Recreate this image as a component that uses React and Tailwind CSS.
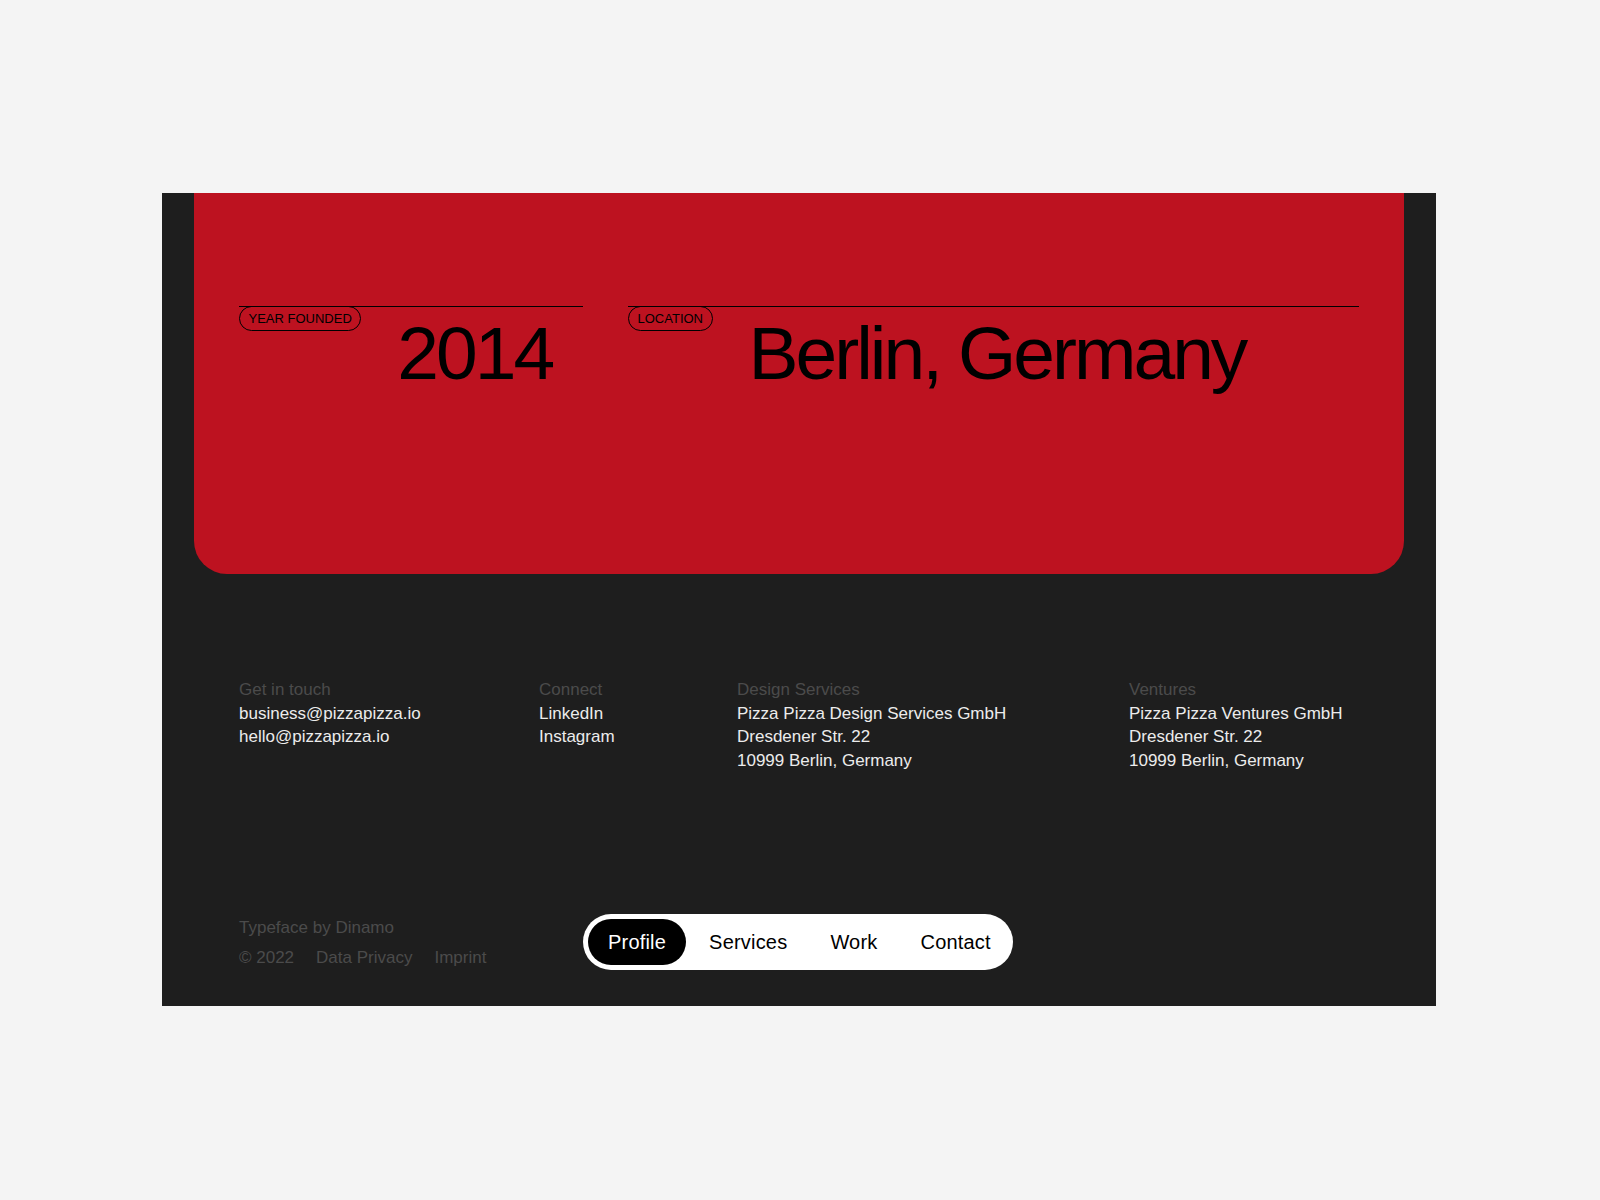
import { useState } from 'react'

const font = { fontFamily: '"Liberation Sans", Arial, sans-serif' }

function Stat({ label, value, className }) {
  return (
    <div className={`border-t border-black ${className}`}>
      <div className="flex items-start gap-9 -mt-px">
        <span className="shrink-0 rounded-full border border-black px-[8.5px] h-[25px] leading-[23px] text-[13px] text-black uppercase">
          {label}
        </span>
        <span className="mt-[10px] text-[75px] leading-[75px] tracking-[-0.04em] text-black whitespace-nowrap">
          {value}
        </span>
      </div>
    </div>
  )
}

function FooterCol({ title, lines }) {
  return (
    <div className="text-[17px] leading-[23.5px]">
      <p className="text-[#4b4b4b]">{title}</p>
      {lines.map((line) => (
        <p key={line} className="text-[#ececec]">{line}</p>
      ))}
    </div>
  )
}

export default function App() {
  const [active, setActive] = useState('Profile')
  const nav = ['Profile', 'Services', 'Work', 'Contact']

  return (
    <div className="min-h-[1200px] bg-[#f4f4f4] pt-[193px]" style={font}>
      <div className="ml-[162px] w-[1274px] h-[813px] bg-[#1e1e1e] flex flex-col">
        {/* Red card */}
        <div className="mx-8 h-[381px] bg-[#bd1220] rounded-b-[33px] px-[45px] pt-[113px]">
          <div className="grid grid-cols-[344px_1fr] gap-[45px]">
            <Stat label="Year Founded" value="2014" />
            <Stat label="Location" value="Berlin, Germany" />
          </div>
        </div>

        {/* Footer columns */}
        <div className="px-[77px] pt-[104px] grid grid-cols-[300px_198px_392px_1fr]">
          <FooterCol title="Get in touch" lines={['business@pizzapizza.io', 'hello@pizzapizza.io']} />
          <FooterCol title="Connect" lines={['LinkedIn', 'Instagram']} />
          <FooterCol
            title="Design Services"
            lines={['Pizza Pizza Design Services GmbH', 'Dresdener Str. 22', '10999 Berlin, Germany']}
          />
          <FooterCol
            title="Ventures"
            lines={['Pizza Pizza Ventures GmbH', 'Dresdener Str. 22', '10999 Berlin, Germany']}
          />
        </div>

        {/* Bottom row */}
        <div className="mt-auto px-[77px] pb-[33px] flex items-start">
          <div className="w-[344px] text-[17px] leading-[30px] text-[#4b4b4b] -mt-px">
            <p>Typeface by Dinamo</p>
            <div className="flex gap-[22px]">
              <span>© 2022</span>
              <span>Data Privacy</span>
              <span>Imprint</span>
            </div>
          </div>
          <nav className="h-[56px] rounded-full bg-white p-[5px] pr-[2px] flex items-center gap-[3px]">
            {nav.map((item) => (
              <button
                key={item}
                onClick={() => setActive(item)}
                className={`h-[46px] rounded-full px-[20px] text-[20px] tracking-[0.01em] ${
                  active === item ? 'bg-black text-white' : 'text-black'
                }`}
              >
                {item}
              </button>
            ))}
          </nav>
        </div>
      </div>
    </div>
  )
}
